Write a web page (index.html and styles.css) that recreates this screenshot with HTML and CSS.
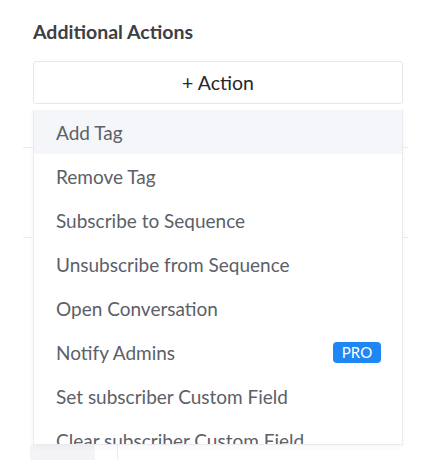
FILE: index.html
```html
<!DOCTYPE html>
<html>
<head>
<meta charset="utf-8">
<link rel="stylesheet" href="styles.css">
</head>
<body>
<div class="panel">
  <h3 class="title">Additional Actions</h3>
  <div class="picker">
    <button class="add-btn">+ Action</button>
    <div class="under">
      <div class="under-row"></div>
      <div class="under-row"></div>
      <div class="under-foot">
        <div class="under-tab"></div>
        <div class="under-sep"></div>
      </div>
    </div>
    <ul class="menu">
      <li class="item active">Add Tag</li>
      <li class="item">Remove Tag</li>
      <li class="item">Subscribe to Sequence</li>
      <li class="item">Unsubscribe from Sequence</li>
      <li class="item">Open Conversation</li>
      <li class="item">Notify Admins <span class="pro">PRO</span></li>
      <li class="item">Set subscriber Custom Field</li>
      <li class="item">Clear subscriber Custom Field</li>
    </ul>
  </div>
</div>
</body>
</html>
```
FILE: styles.css
```css
html, body {
  margin: 0;
  padding: 0;
  background: #ffffff;
  font-family: Lato, "Open Sans", sans-serif;
}
.panel {
  padding: 20px 0 0 33px;
  width: 370px;
}
.title {
  margin: 0;
  font-size: 19.5px;
  font-weight: 700;
  color: #3f4044;
  line-height: 24px;
}
.picker {
  position: relative;
  margin-top: 17px;
}
.add-btn {
  display: block;
  width: 370px;
  height: 43px;
  margin: 0;
  padding: 0;
  background: #ffffff;
  border: 1px solid #e7e7ea;
  border-radius: 3px;
  font-family: Lato, "Open Sans", sans-serif;
  font-size: 19.5px;
  color: #26272b;
  text-align: center;
}
.under {
  margin-left: -10px;
  width: 385px;
}
.under-row {
  height: 0;
  border-top: 1px solid #ebebee;
  margin-top: 43px;
}
.under-row + .under-row {
  margin-top: 89px;
}
.under-foot {
  display: flex;
  margin-top: 207px;
  height: 15px;
}
.under-tab {
  width: 65px;
  margin-left: 7px;
  background: #f4f4f6;
}
.under-sep {
  width: 1px;
  margin-left: 22px;
  background: #eeeef0;
}
.menu {
  position: absolute;
  left: 0;
  top: 49px;
  width: 368px;
  height: 334px;
  margin: 0;
  padding: 0;
  list-style: none;
  overflow: hidden;
  background: #ffffff;
  border: 1px solid #ebebef;
  border-top: 0;
  box-shadow: 0 2px 6px rgba(0,0,0,0.04);
}
.item {
  display: flex;
  align-items: center;
  justify-content: space-between;
  height: 44px;
  padding: 0 21px 0 22px;
  font-size: 19px;
  color: #5c6067;
}
.item.active {
  background: #f5f6fa;
}
.pro {
  display: inline-block;
  width: 48px;
  height: 21px;
  line-height: 21px;
  text-align: center;
  background: #1e87f4;
  color: #ffffff;
  font-size: 15px;
  border-radius: 4px;
}
```
